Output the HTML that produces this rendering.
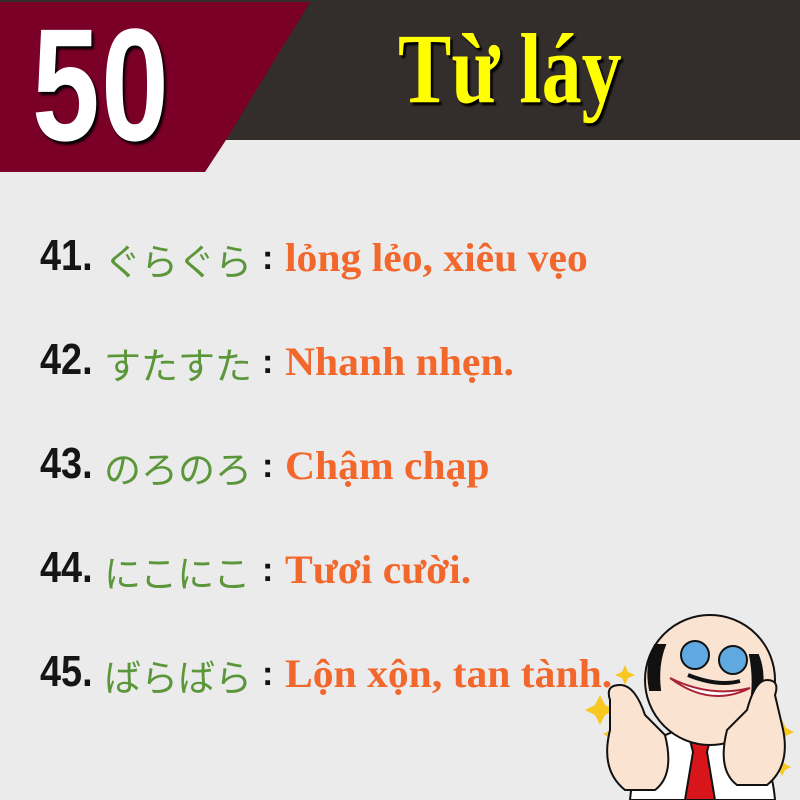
<!DOCTYPE html>
<html><head><meta charset="utf-8"><style>
body{margin:0;width:800px;height:800px;background:#ebebeb;position:relative;overflow:hidden}
.a{position:absolute;white-space:nowrap}
.row{position:absolute;left:40px;height:50px;white-space:nowrap}
.n{position:absolute;left:0;bottom:0;font:bold 44px "Liberation Sans",sans-serif;color:#151515;transform:scaleX(.86);transform-origin:left bottom;line-height:44px}
.j{position:absolute;left:64px;bottom:-6px;font:400 37px "Noto Sans CJK JP",sans-serif;color:#5b963a;line-height:50px}
.c{position:absolute;left:222px;bottom:0;font:bold 34px "Liberation Sans",sans-serif;color:#111;line-height:40px}
.v{position:absolute;left:245px;bottom:-3px;font:bold 40px "Liberation Serif",serif;color:#f2672c;line-height:46px;transform:scaleX(1.04);transform-origin:left bottom}
</style></head><body>
<svg class="a" style="left:0;top:0" width="800" height="175">
<rect x="0" y="0" width="800" height="140" fill="#332d2c"/>
<polygon points="0,2 310,2 226,140 205,172 0,172" fill="#7a0028"/>
</svg>
<div class="a" style="left:32px;top:2px;font:bold 160px 'Liberation Sans',sans-serif;color:#fff;transform:scaleX(.76);transform-origin:left top;line-height:166px;text-shadow:3px 3px 3px #000;letter-spacing:2px">50</div>
<div class="a" style="left:398px;top:14px;font:bold 100px 'Liberation Serif',serif;color:#ffff00;transform:scaleX(.8);transform-origin:left top;line-height:110px;text-shadow:3px 3px 2px #000">Từ láy</div>

<div class="row" style="top:228px"><span class="n">41.</span><span class="j">ぐらぐら</span><span class="c">:</span><span class="v">lỏng lẻo, xiêu vẹo</span></div>
<div class="row" style="top:332px"><span class="n">42.</span><span class="j">すたすた</span><span class="c">:</span><span class="v">Nhanh nhẹn.</span></div>
<div class="row" style="top:436px"><span class="n">43.</span><span class="j">のろのろ</span><span class="c">:</span><span class="v">Chậm chạp</span></div>
<div class="row" style="top:540px"><span class="n">44.</span><span class="j">にこにこ</span><span class="c">:</span><span class="v">Tươi cười.</span></div>
<div class="row" style="top:644px"><span class="n">45.</span><span class="j">ばらばら</span><span class="c">:</span><span class="v">Lộn xộn, tan tành.</span></div>

<svg class="a" style="left:570px;top:600px" width="230" height="200" viewBox="0 0 230 200" stroke="#111" stroke-width="2">
<g fill="#f8c820" stroke="none">
<path d="M30,95 l5,10 l10,5 l-10,5 l-5,10 l-5,-10 l-10,-5 l10,-5z"/>
<path d="M45,122 l4,8 l8,4 l-8,4 l-4,8 l-4,-8 l-8,-4 l8,-4z"/>
<path d="M55,65 l3,7 l7,3 l-7,3 l-3,7 l-3,-7 l-7,-3 l7,-3z"/>
<path d="M212,120 l4,8 l8,4 l-8,4 l-4,8 l-4,-8 l-8,-4 l8,-4z"/>
<path d="M212,158 l3,6 l6,3 l-6,3 l-3,6 l-3,-6 l-6,-3 l6,-3z"/>
</g>
<path d="M60,200 Q65,140 110,130 L160,130 Q200,140 205,200z" fill="#fff"/>
<path d="M120,140 l20,0 l-3,12 l8,48 l-30,0 l8,-48z" fill="#d8151b"/>
<ellipse cx="140" cy="80" rx="65" ry="65" fill="#fbe3d2"/>
<path d="M85,45 q-10,20 -5,45 l10,0 q-3,-25 5,-45z" fill="#111"/>
<path d="M188,55 q8,20 2,40 l-8,0 q2,-20 -2,-40z" fill="#111"/>
<circle cx="125" cy="55" r="14" fill="#5fa9e0"/>
<circle cx="163" cy="60" r="14" fill="#5fa9e0"/>
<path d="M118,75 q30,12 52,6" fill="none" stroke-width="4"/>
<path d="M100,78 q40,30 80,10 q-40,10 -80,-10z" fill="#fff" stroke="#a23"/>
<path d="M40,100 q-5,-15 10,-15 q15,0 25,30 l20,20 q10,40 -10,55 l-30,0 q-25,-20 -15,-60z" fill="#fbe3d2"/>
<path d="M205,95 q5,-15 -8,-15 q-12,0 -20,30 l-20,20 q-10,40 10,55 l30,0 q25,-20 15,-60z" fill="#fbe3d2"/>
</svg>
</body></html>
